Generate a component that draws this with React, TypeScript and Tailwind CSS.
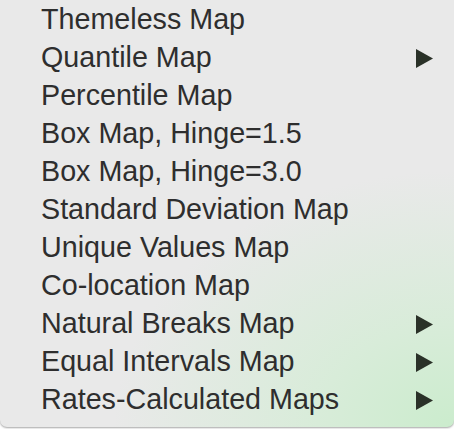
const items: { label: string; sub?: boolean }[] = [
  { label: 'Themeless Map' },
  { label: 'Quantile Map', sub: true },
  { label: 'Percentile Map' },
  { label: 'Box Map, Hinge=1.5' },
  { label: 'Box Map, Hinge=3.0' },
  { label: 'Standard Deviation Map' },
  { label: 'Unique Values Map' },
  { label: 'Co-location Map' },
  { label: 'Natural Breaks Map', sub: true },
  { label: 'Equal Intervals Map', sub: true },
  { label: 'Rates-Calculated Maps', sub: true },
]

function Arrow() {
  return (
    <svg width="18" height="19" viewBox="0 0 18 19" className="mr-[20px]">
      <path d="M0 0 L17 9.5 L0 19 Z" fill="currentColor" />
    </svg>
  )
}

export default function App() {
  return (
    <div className="h-[429px] w-[454px] bg-white">
      <div className="h-[427px] w-full overflow-hidden rounded-b-[7px] bg-[#e9e9e9] bg-[radial-gradient(ellipse_75%_60%_at_100%_100%,#cbeccd_0%,#d8ecd9_40%,rgba(233,233,233,0)_100%)] pt-px shadow-[0_1px_2px_rgba(0,0,0,0.35)]">
        <ul className="font-['Liberation_Sans',Arial,sans-serif] text-[28.7px] text-[#2e2e2e]">
          {items.map((it) => (
            <li key={it.label} className="flex h-[38px] items-center justify-between pl-[41px]">
              <span>{it.label}</span>
              {it.sub && (
                <span className="text-[#2a3128]">
                  <Arrow />
                </span>
              )}
            </li>
          ))}
        </ul>
      </div>
    </div>
  )
}
